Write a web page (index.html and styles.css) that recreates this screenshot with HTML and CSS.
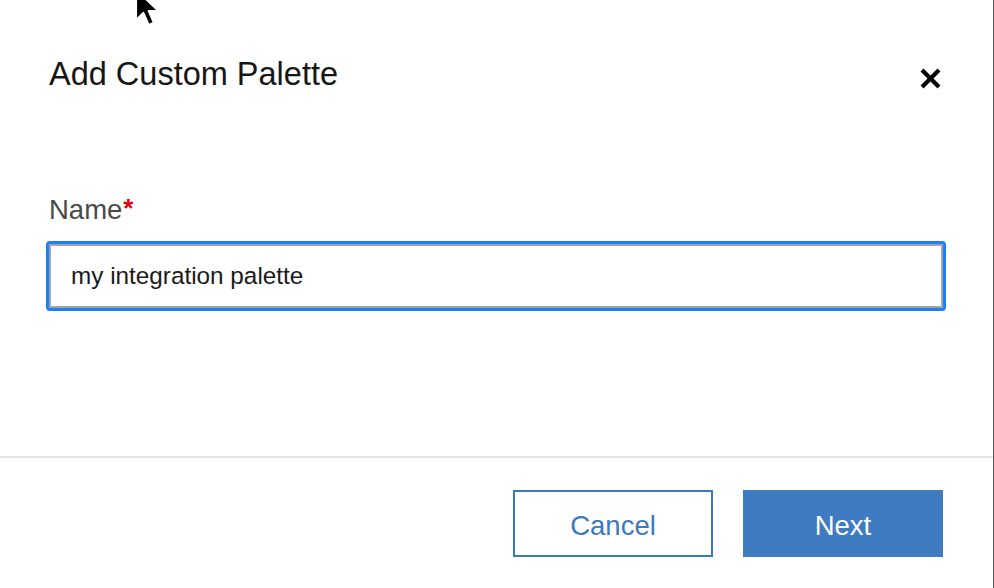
FILE: index.html
```html
<!DOCTYPE html>
<html lang="en">
<head>
<meta charset="utf-8">
<title>Add Custom Palette</title>
<link rel="stylesheet" href="styles.css">
</head>
<body>
<div class="dialog">
  <div class="header">
    <h1 class="title">Add Custom Palette</h1>
    <button class="close" aria-label="Close">
      <svg width="21" height="21" viewBox="0 0 21 21"><path d="M3.5 3.5 L17.5 17.5 M17.5 3.5 L3.5 17.5" stroke="#000" stroke-width="4.2" stroke-linecap="square" fill="none"/></svg>
    </button>
  </div>
  <div class="body">
    <label class="label" for="name">Name<span class="req">*</span></label>
    <div class="ring">
      <input id="name" class="field" type="text" value="my integration palette">
    </div>
  </div>
  <div class="footer">
    <button class="btn btn-secondary">Cancel</button>
    <button class="btn btn-primary">Next</button>
  </div>
</div>
<svg class="cursor" width="32" height="46" viewBox="0 0 24 34">
  <path d="M3 1 L3 24 L8.5 18.5 L12.5 27.5 L16.5 25.8 L12.6 17 L20 17 Z" fill="#000" stroke="#fff" stroke-width="1.6" stroke-linejoin="round"/>
</svg>
</body>
</html>
```

FILE: styles.css
```css
html, body {
  margin: 0;
  padding: 0;
  background: #fff;
}
body {
  font-family: "Liberation Sans", Arial, sans-serif;
  position: relative;
  width: 994px;
  height: 588px;
  overflow: hidden;
}
.dialog {
  box-sizing: border-box;
  width: 994px;
  height: 588px;
  border-right: 1px solid #5c5c5c;
  display: flex;
  flex-direction: column;
  background: #fff;
}
.header {
  display: flex;
  justify-content: space-between;
  align-items: flex-start;
  padding: 54px 52px 0 49px;
}
.title {
  margin: 0;
  font-size: 32.5px;
  line-height: 40px;
  font-weight: 400;
  color: #161616;
}
.close {
  margin-top: 14px;
  padding: 0;
  border: 0;
  background: none;
  width: 21px;
  height: 21px;
  display: block;
}
.close svg { display: block; }
.body {
  flex: 1;
  padding: 100px 0 0 46px;
  display: flex;
  flex-direction: column;
  align-items: flex-start;
}
.label {
  margin-left: 3px;
  font-size: 27.5px;
  line-height: 32px;
  color: #4a4a4a;
}
.req {
  color: #e8000b;
  font-size: 26px;
  font-weight: 700;
  vertical-align: top;
  line-height: 28px;
  margin-left: 1px;
}
.ring {
  margin-top: 15px;
  padding: 3px;
  background: #1a7ffb;
  border-radius: 4px;
}
.field {
  box-sizing: border-box;
  display: block;
  width: 894px;
  height: 64px;
  margin: 0;
  border: 2px solid #a4a4a4;
  background: #fff;
  padding: 0 20px;
  font-family: "Liberation Sans", Arial, sans-serif;
  font-size: 24.3px;
  line-height: 60px;
  color: #1a1a1a;
  outline: none;
}
.footer {
  border-top: 2px solid #e4e4e4;
  padding: 32px 50px 0 0;
  height: 98px;
  display: flex;
  justify-content: flex-end;
  gap: 30px;
}
.btn {
  box-sizing: border-box;
  width: 200px;
  height: 67px;
  font-family: "Liberation Sans", Arial, sans-serif;
  font-size: 27.5px;
  padding: 5px 0 0;
  cursor: pointer;
}
.btn-secondary {
  background: #fff;
  border: 2px solid #3b78c0;
  color: #3b78c0;
}
.btn-primary {
  background: #3e7bc0;
  border: 0;
  color: #fff;
}
.cursor {
  position: absolute;
  left: 132px;
  top: -12px;
}
```
